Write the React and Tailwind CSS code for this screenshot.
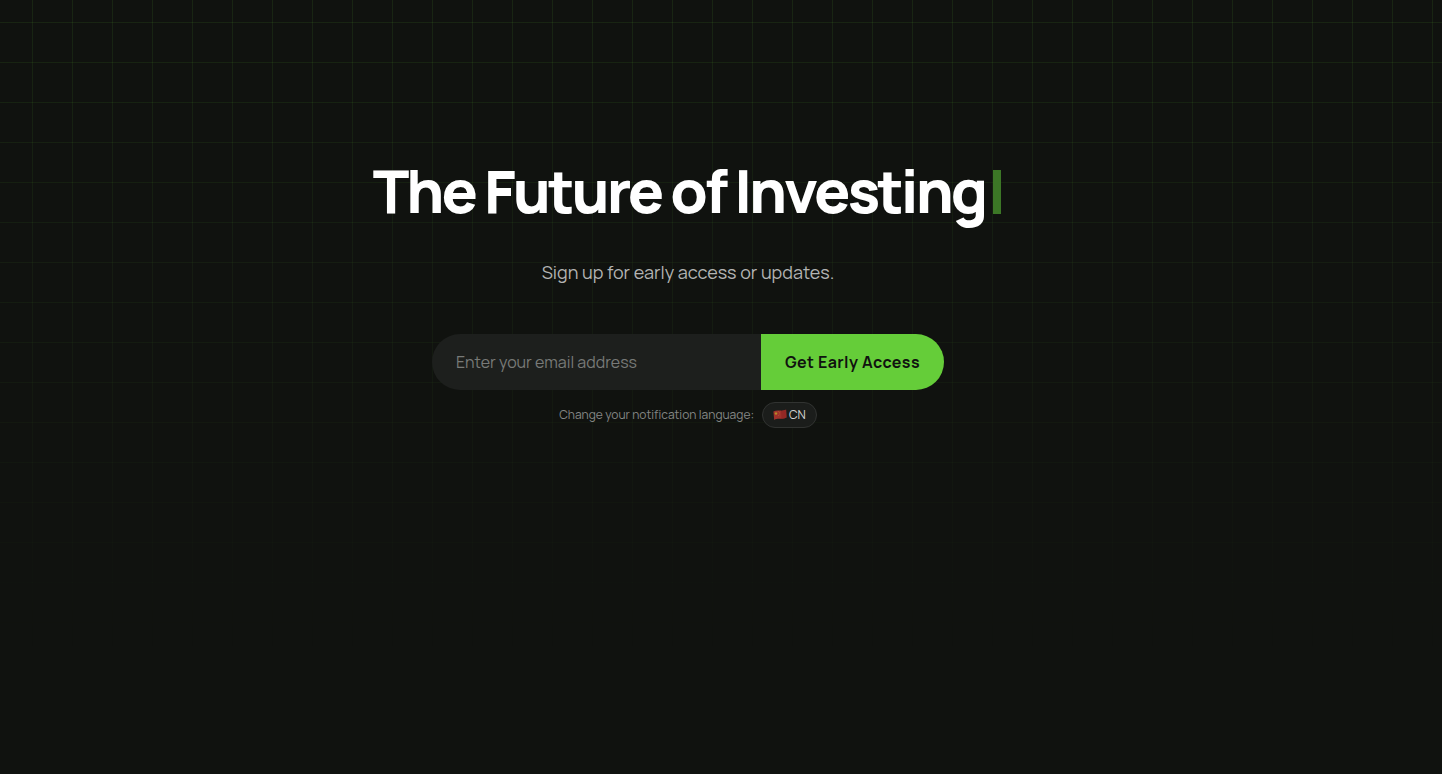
import { useState } from 'react';

function FlagCN() {
  return (
    <svg viewBox="0 0 14 12" className="h-3 w-3.5 opacity-70" aria-hidden="true">
      <path d="M.4 2.400C2.600 1.300 4.700 1.500 7 1.600s4.200 0 6.100-1l.5 7.900c-2 1.200-4.200 1.300-6.500 1.200S3.200 9.700 1.200 10.900z" fill="#d93a33" />
      <path d="M8 1.700c2 .1 3.500 0 5.100-1l.5 7.800c-1.700 1.100-3.300 1.300-5.100 1.200z" fill="#a91f1d" opacity=".4" />
      <path d="M3 2.600l.5 1.200 1.300.1-1 .8.3 1.300L3 5.300l-1.100.7.300-1.300-1-.8 1.300-.1z" fill="#f7c52b" />
      <path d="M5.300 2h.6v.6h-.6zM6.100 3.200h.6v.6h-.6zM6.100 4.700h.6v.6h-.6zM5.300 5.900h.6v.6h-.6z" fill="#f7c52b" />
    </svg>
  );
}

export default function App() {
  const [email, setEmail] = useState('');

  return (
    <div className="relative isolate min-h-screen bg-[#10120f] font-[Manrope,Inter,sans-serif]">
      <div
        aria-hidden="true"
        className="absolute inset-0 -z-10 bg-[linear-gradient(to_right,#66cf3a1a_1px,transparent_1px),linear-gradient(to_bottom,#66cf3a1a_1px,transparent_1px)] bg-[size:40px_40px] bg-[position:32px_22px] mask-[linear-gradient(to_bottom,black,transparent_85%)]"
      />
      <main className="flex flex-col items-center pt-[158px] pr-[66px] text-center">
        <h1 className="flex items-center gap-2 pr-0.5 text-6xl leading-16 font-extrabold tracking-tighter text-white">
          The Future of Investing
          <span className="mt-1 h-11 w-2 bg-[#3c7726]" />
        </h1>
        <p className="mt-8 text-lg leading-9 font-normal text-[#b3b4b3]">
          Sign up for early access or updates.
        </p>
        <form className="mt-11 flex h-14 w-full max-w-lg" onSubmit={(e) => e.preventDefault()}>
          <input
            type="email"
            aria-label="Email address"
            placeholder="Enter your email address"
            value={email}
            onChange={(e) => setEmail(e.target.value)}
            className="min-w-0 flex-1 rounded-l-full bg-[#1d1f1d] px-6 text-base font-normal text-white outline-none placeholder:text-[#787a78]"
          />
          <button
            type="submit"
            className="rounded-r-full bg-[#65cd39] px-6 text-base font-bold tracking-wide whitespace-nowrap text-[#10120f]"
          >
            Get Early Access
          </button>
        </form>
        <div className="mt-3 flex items-center gap-2 text-xs font-normal text-[#858785]">
          <span>Change your notification language:</span>
          <button
            type="button"
            className="flex h-[26px] items-center gap-0.5 rounded-full border border-[#313331] bg-[#1b1d1b] px-2.5 text-[#d3d4d3]"
          >
            <FlagCN />
            CN
          </button>
        </div>
      </main>
    </div>
  );
}
